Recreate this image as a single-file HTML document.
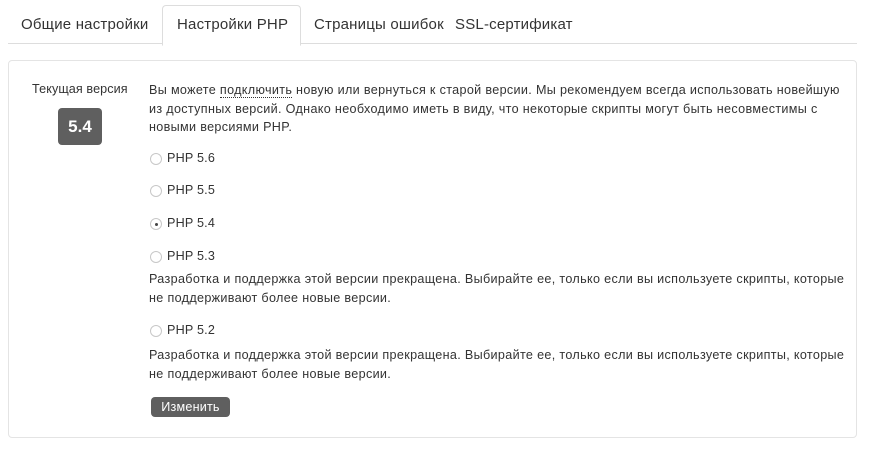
<!DOCTYPE html>
<html><head><meta charset="utf-8"><style>
body{margin:0;width:882px;height:454px;background:#fff;font-family:"Liberation Sans","DejaVu Sans",sans-serif;color:#333;position:relative;overflow:hidden}
.a{position:absolute;white-space:nowrap}
.tab{font-size:15px;top:16px;letter-spacing:0.2px;color:#333}
.line{position:absolute;left:8px;width:849px;top:43px;height:1px;background:#ddd}
.act{position:absolute;left:162px;top:5px;width:137px;height:39px;border:1px solid #ddd;border-bottom:1px solid #fff;border-radius:4px 4px 0 0;background:#fff}
.panel{position:absolute;left:8px;top:60px;width:847px;height:376px;border:1px solid #e4e4e4;border-radius:4px}
.t{font-size:12.6px;letter-spacing:0.33px;line-height:18.5px}
.r{position:absolute;left:150px;width:12px;height:12px;border:1px solid #c8c8c8;border-radius:50%;box-sizing:border-box}
.rl{font-size:12.6px;left:167px;letter-spacing:0.2px}
</style></head><body>
<div class="line"></div>
<div class="act"></div>
<div class="a tab" style="left:21px">Общие настройки</div>
<div class="a tab" style="left:177px">Настройки PHP</div>
<div class="a tab" style="left:314px">Страницы ошибок</div>
<div class="a tab" style="left:455px">SSL-сертификат</div>
<div class="panel"></div>
<div class="a t" style="left:32px;top:80px;letter-spacing:0.1px">Текущая версия</div>
<div class="a" style="left:58px;top:108px;width:44px;height:37px;background:#5f5f5f;border-radius:4px;color:#fff;font-weight:bold;font-size:17px;text-align:center;line-height:37px">5.4</div>
<div class="a t" style="left:149px;top:81px">Вы можете <span style="border-bottom:1px dotted #333">подключить</span> новую или вернуться к старой версии. Мы рекомендуем всегда использовать новейшую<br>из доступных версий. Однако необходимо иметь в виду, что некоторые скрипты могут быть несовместимы с<br>новыми версиями PHP.</div>
<div class="r" style="top:153px"></div><div class="a rl" style="top:151px">PHP 5.6</div>
<div class="r" style="top:185px"></div><div class="a rl" style="top:183px">PHP 5.5</div>
<div class="r" style="top:218px"><div style="position:absolute;left:3.5px;top:3.5px;width:3px;height:3px;border-radius:50%;background:#444"></div></div><div class="a rl" style="top:216px">PHP 5.4</div>
<div class="r" style="top:251px"></div><div class="a rl" style="top:249px">PHP 5.3</div>
<div class="a t" style="left:149px;top:270px">Разработка и поддержка этой версии прекращена. Выбирайте ее, только если вы используете скрипты, которые<br>не поддерживают более новые версии.</div>
<div class="r" style="top:325px"></div><div class="a rl" style="top:323px">PHP 5.2</div>
<div class="a t" style="left:149px;top:346px">Разработка и поддержка этой версии прекращена. Выбирайте ее, только если вы используете скрипты, которые<br>не поддерживают более новые версии.</div>
<div class="a" style="left:151px;top:397px;width:79px;height:20px;background:#5f5f5f;border-radius:4px;color:#fff;font-size:12.6px;text-align:center;line-height:20px;letter-spacing:0.2px">Изменить</div>
</body></html>
